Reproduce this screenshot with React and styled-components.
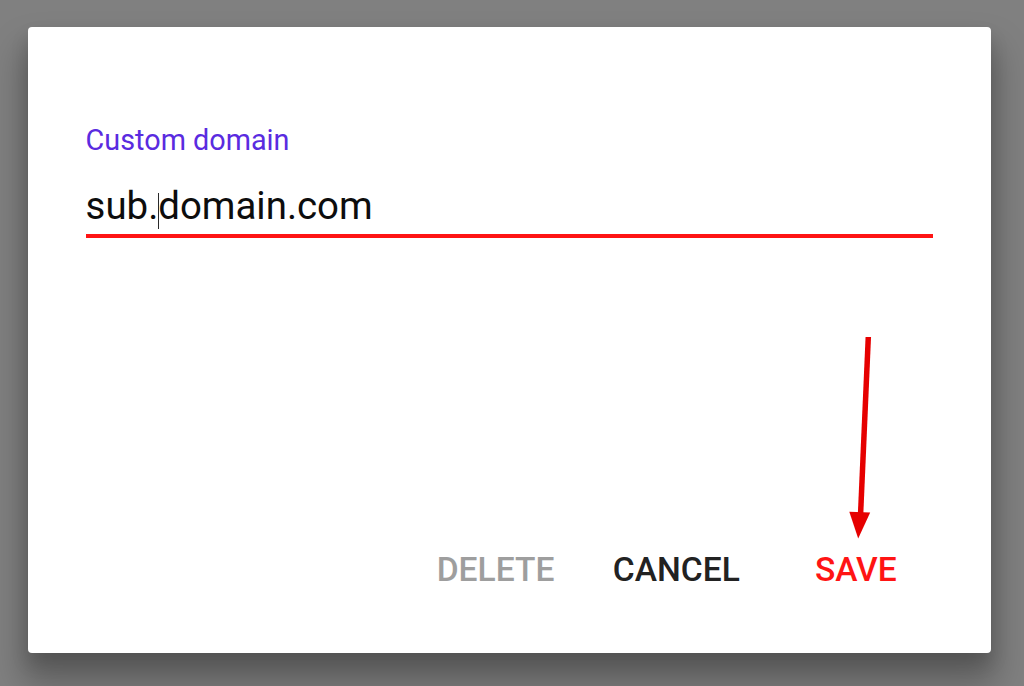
import React from "react";
import styled, { createGlobalStyle } from "styled-components";

const GlobalStyle = createGlobalStyle`
  html, body {
    margin: 0;
    padding: 0;
    background: #808080;
  }
  body {
    font-family: Roboto, "Noto Sans", "Liberation Sans", sans-serif;
  }
`;

const Backdrop = styled.div`
  width: 1024px;
  height: 686px;
  box-sizing: border-box;
  padding: 27px 33px 33px 28px;
  display: flex;
  background: #808080;
  overflow: hidden;
`;

const Dialog = styled.div`
  position: relative;
  flex: 1;
  display: flex;
  flex-direction: column;
  background: #ffffff;
  border-radius: 4px;
  padding: 96px 58px 40px 57.6px;
  box-shadow: 0 26px 34px 6px rgba(0, 0, 0, 0.26),
    0 10px 18px rgba(0, 0, 0, 0.14);
`;

const Field = styled.div`
  display: flex;
  flex-direction: column;
`;

const Label = styled.div`
  font-family: Roboto, "Liberation Sans", sans-serif;
  font-size: 28.8px;
  line-height: 34px;
  color: #5a2be0;
`;

const InputLine = styled.div`
  margin-top: 25.8px;
  font-family: Roboto, "Liberation Sans", sans-serif;
  font-size: 38.4px;
  line-height: 46px;
  color: #0d0d0d;
  padding-bottom: 4.9px;
  border-bottom: 4px solid #ff1414;
  white-space: pre;
`;

const Caret = styled.span`
  display: inline-block;
  width: 1.5px;
  height: 36px;
  margin: 0 -0.75px;
  background: #2a2a2a;
  vertical-align: -10px;
`;

const Spacer = styled.div`
  flex: 1;
`;

const ButtonBar = styled.div`
  display: flex;
  justify-content: flex-end;
  gap: 20px;
  margin-right: 0.4px;
`;

const ActionButton = styled.button`
  min-width: 153.6px;
  height: 86.4px;
  padding: 0 19.2px;
  border: none;
  background: transparent;
  font-family: Roboto, "Liberation Sans", sans-serif;
  font-weight: 500;
  font-size: 33.6px;
  line-height: 86.4px;
  text-align: center;
  text-transform: uppercase;
  letter-spacing: 0;
  color: ${(p) =>
    p.$variant === "disabled"
      ? "#9e9e9e"
      : p.$variant === "primary"
      ? "#ff1414"
      : "#222222"};
`;

const Annotation = styled.svg`
  position: absolute;
  left: 792px;
  top: 293px;
  width: 80px;
  height: 250px;
  overflow: visible;
`;

export default function App() {
  return (
    <>
      <GlobalStyle />
      <Backdrop>
        <Dialog>
          <Field>
            <Label>Custom domain</Label>
            <InputLine>
              sub.
              <Caret />
              domain.com
            </InputLine>
          </Field>
          <Spacer />
          <ButtonBar>
            <ActionButton $variant="disabled">Delete</ActionButton>
            <ActionButton>Cancel</ActionButton>
            <ActionButton $variant="primary">Save</ActionButton>
          </ButtonBar>
          <Annotation viewBox="820 320 80 250">
            <line
              x1="868.3"
              y1="337"
              x2="860.5"
              y2="516"
              stroke="#e60000"
              strokeWidth="5.5"
            />
            <polygon
              points="849.3,511.7 870.2,512.6 858.2,538.5"
              fill="#e60000"
            />
          </Annotation>
        </Dialog>
      </Backdrop>
    </>
  );
}
